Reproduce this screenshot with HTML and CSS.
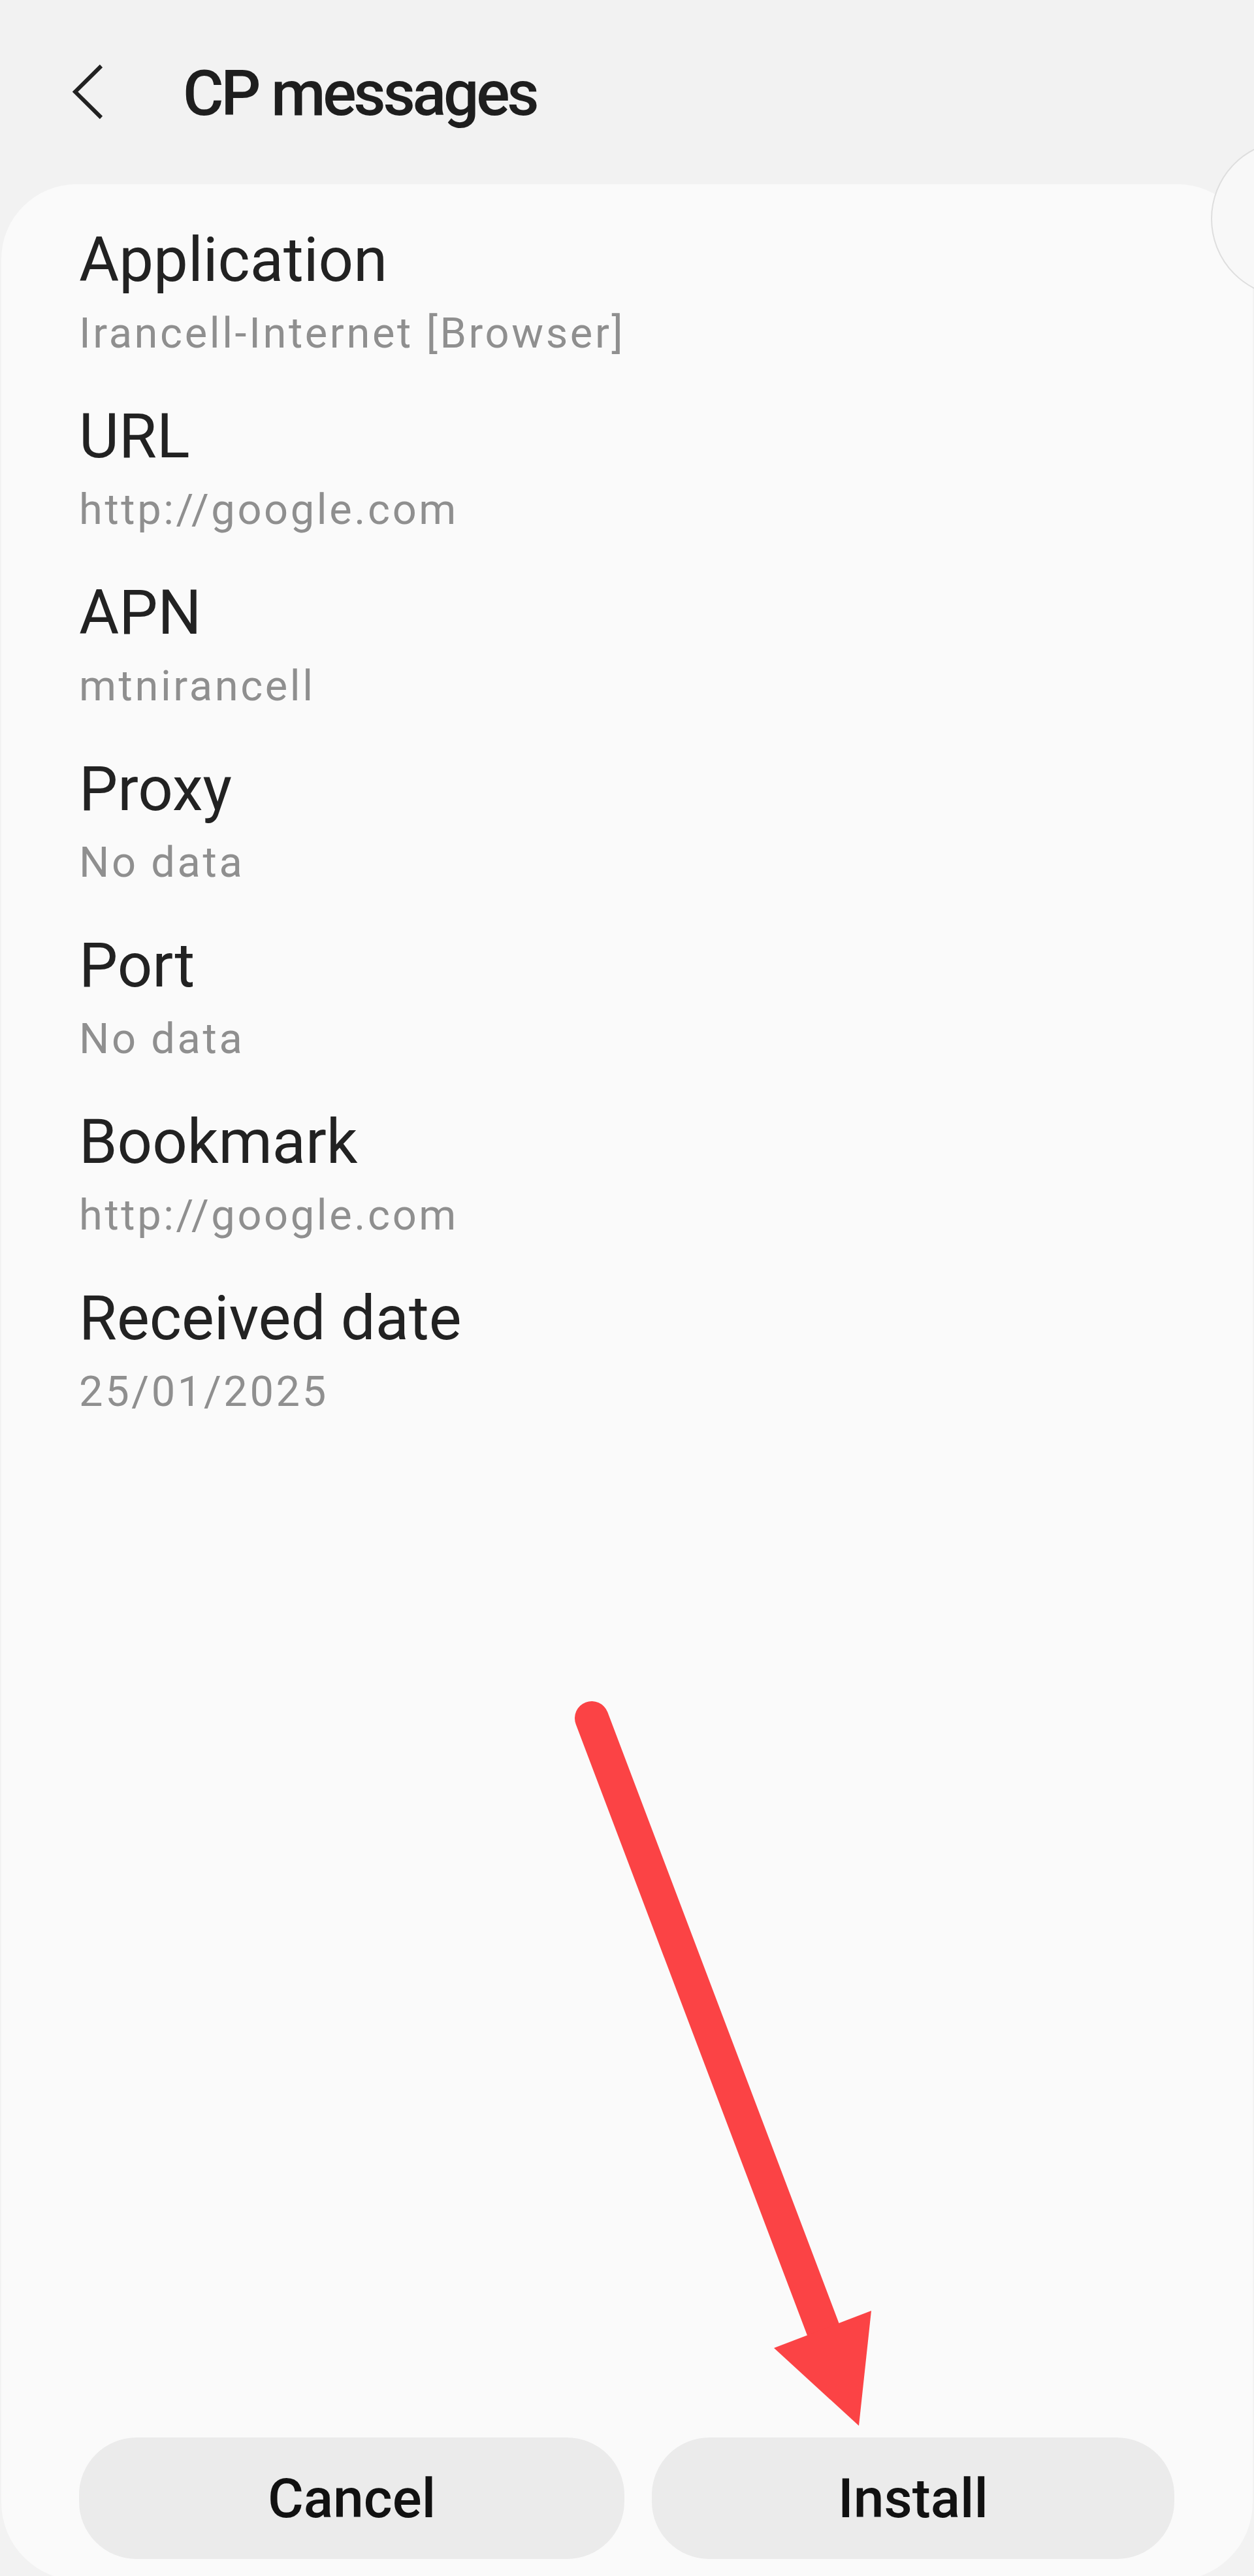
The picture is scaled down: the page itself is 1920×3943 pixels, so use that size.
FILE: index.html
```html
<!DOCTYPE html>
<html lang="en">
<head>
    <meta charset="UTF-8">
    <meta name="viewport" content="width=device-width, initial-scale=1.0">
    <title>CP messages</title>
    <link rel="stylesheet" href="styles.css">
</head>
<body>
    <div class="topbar">
        <svg class="back" width="50" height="90" viewBox="0 0 50 90">
            <polyline points="45,3 5,42.5 45,82" fill="none" stroke="#222" stroke-width="6"/>
        </svg>
        <h1 class="title">CP messages</h1>
    </div>

    <!-- edge panel handle, cut off by the screen edge -->
    <svg class="edge-handle" width="67" height="244" viewBox="0 0 67 244">
        <circle cx="121" cy="122" r="119" fill="#f8f8f8" stroke="#dedede" stroke-width="2"/>
    </svg>

    <div class="card">
        <div class="fields">
            <div class="field">
                <div class="label">Application</div>
                <div class="value">Irancell-Internet [Browser]</div>
            </div>
            <div class="field">
                <div class="label">URL</div>
                <div class="value">http://google.com</div>
            </div>
            <div class="field">
                <div class="label">APN</div>
                <div class="value">mtnirancell</div>
            </div>
            <div class="field">
                <div class="label">Proxy</div>
                <div class="value">No data</div>
            </div>
            <div class="field">
                <div class="label">Port</div>
                <div class="value">No data</div>
            </div>
            <div class="field">
                <div class="label">Bookmark</div>
                <div class="value">http://google.com</div>
            </div>
            <div class="field">
                <div class="label">Received date</div>
                <div class="value">25/01/2025</div>
            </div>
        </div>

        <div class="actions">
            <button class="btn btn-cancel">Cancel</button>
            <button class="btn btn-install">Install</button>
        </div>
    </div>

    <!-- red annotation arrow pointing at Install -->
    <svg class="arrow" width="520" height="1150" viewBox="850 2580 520 1150">
        <line x1="906" y1="2630" x2="1262" y2="3570" stroke="#fb4345" stroke-width="52" stroke-linecap="round"/>
        <polygon points="1185,3594 1334,3537 1315,3713" fill="#fb4345"/>
    </svg>
</body>
</html>
```

FILE: styles.css
```css
html, body {
    overflow: hidden;
}
body {
    margin: 0;
    height: 3943px;
    position: relative;
    background-color: #f2f2f2;
    font-family: Roboto, "Noto Sans", sans-serif;
    color: #222;
}
.topbar {
    height: 282px;
    box-sizing: border-box;
    padding: 87px 0 0 110px;
    display: flex;
    align-items: flex-start;
}
.back {
    margin-top: 11px;
    margin-right: 120px;
}
.title {
    margin: 0;
    font-size: 96px;
    line-height: 112px;
    font-weight: 500;
    letter-spacing: -4.3px;
    color: #1e1e1e;
}
.edge-handle {
    position: absolute;
    left: 1853px;
    top: 213px;
    z-index: 2;
}
.card {
    margin: 0 2px;
    height: 3668px;
    box-sizing: border-box;
    padding: 60px 0 33px 119px;
    background: #fafafa;
    border-radius: 115px 115px 120px 120px;
    display: flex;
    flex-direction: column;
}
.fields {
    flex: 1;
}
.field {
    padding-bottom: 62px;
}
.label {
    font-size: 94px;
    line-height: 112px;
    color: #222;
}
.value {
    margin-top: 16px;
    font-size: 65px;
    line-height: 80px;
    letter-spacing: 3.6px;
    color: #8f8f8f;
}
.actions {
    display: flex;
    gap: 42px;
}
.btn {
    height: 186px;
    border: none;
    border-radius: 88px;
    background: #ebebeb;
    font-family: Roboto, "Noto Sans", sans-serif;
    font-size: 84px;
    font-weight: 500;
    color: #111;
    padding: 0;
}
.btn-cancel {
    width: 835px;
}
.btn-install {
    width: 800px;
}
.arrow {
    position: absolute;
    left: 850px;
    top: 2580px;
}
```
